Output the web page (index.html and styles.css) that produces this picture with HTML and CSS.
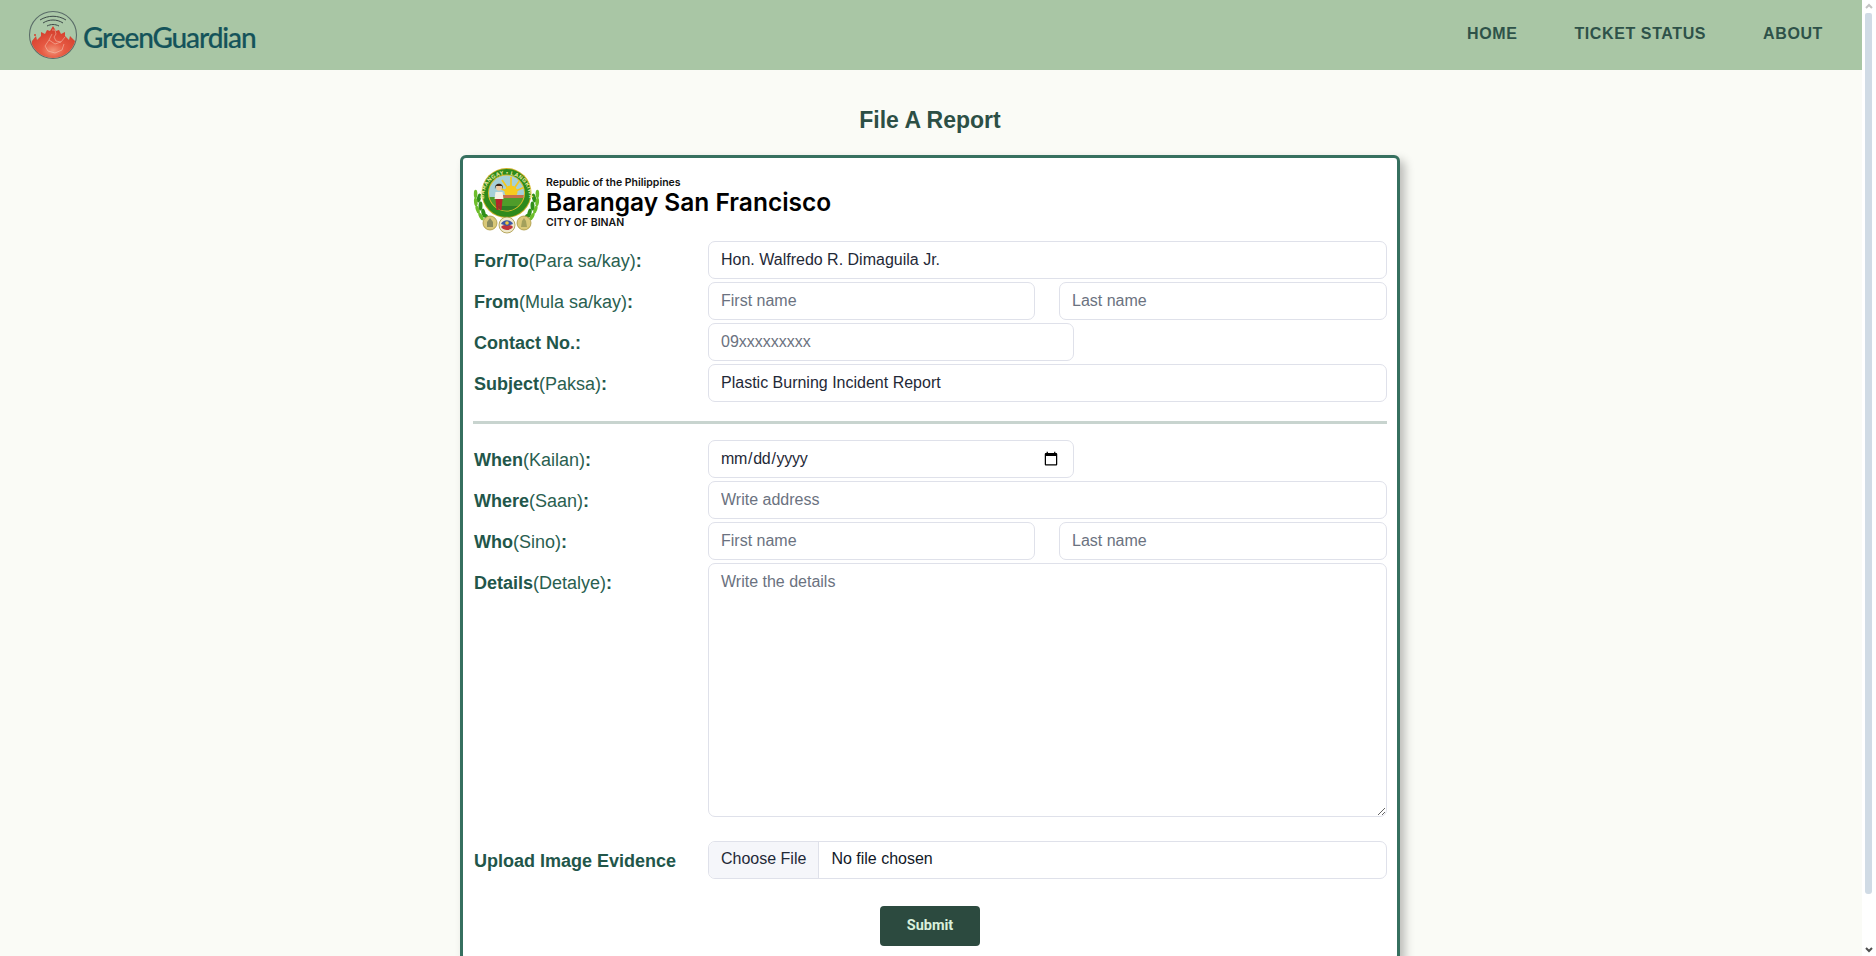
FILE: index.html
```html
<!DOCTYPE html>
<html lang="en">
<head>
  <meta charset="UTF-8" />
  <meta name="viewport" content="width=device-width, initial-scale=1.0"/>
  <title>GreenGuardian - File A Report</title>
  <link rel="stylesheet" href="styles.css">
</head>
<body>
  <div class="window">
    <div class="main">
      <header class="topbar">
        <a class="brand" href="#">
          <svg class="brand-icon" viewBox="0 0 50 50" width="50" height="50" aria-hidden="true">
            <defs>
              <radialGradient id="flameFill" cx="50%" cy="72%" r="58%">
                <stop offset="0%" stop-color="#f39478"/>
                <stop offset="40%" stop-color="#e75a43"/>
                <stop offset="100%" stop-color="#d5402e"/>
              </radialGradient>
              <clipPath id="ballClip"><circle cx="25" cy="25" r="23"/></clipPath>
            </defs>
            <circle cx="25" cy="25" r="23.5" fill="#abc8a8" stroke="#5b6d69" stroke-width="1.1"/>
            <g clip-path="url(#ballClip)">
              <path d="M4 31l4-5 1 4 4-4v-4l4 2 2-4 3 1 3-5 3 5 3-1 2 4 4-2v4l4 4 1-4 5 5 3 19H0z" fill="url(#flameFill)"/>
            </g>
            <circle cx="7" cy="25" r="1" fill="#d5402e"/>
            <g fill="none" stroke="#f9dfcf" stroke-width=".6" opacity=".75">
              <path d="M24 20h3l1 4-2 3 2 4 5 1 4-5"/>
              <path d="M24 24l-3 6-4 6 3 5 7 2 7-3 2-6"/>
              <path d="M21 30l6 4 6-2"/>
            </g>
            <g fill="none" stroke="#3d4a48" stroke-width="1">
              <path d="M12 10c8-5 18-5 26 0"/>
              <path d="M15 13c6-4 14-4 20 0"/>
              <path d="M19 16c4-2 8-2 12 0"/>
            </g>
          </svg>
          <span class="brand-name">GreenGuardian</span>
        </a>
        <nav class="nav">
          <a href="#">HOME</a>
          <a href="#">TICKET STATUS</a>
          <a href="#">ABOUT</a>
        </nav>
      </header>

      <main class="content">
        <h1 class="page-title">File A Report</h1>
        <form class="card">
          <div class="letterhead">
            <svg class="seal" viewBox="0 0 68 66" width="68" height="66" aria-hidden="true">
              <defs>
                <path id="ringArc" d="M11 29a22.5 22.5 0 1 1 45 0"/>
                <clipPath id="sealClip"><circle cx="33.5" cy="25" r="17.5"/></clipPath>
                <g id="laurel">
                  <g fill="#2f8f1a">
                    <ellipse cx="6" cy="30" rx="2" ry="4.5" transform="rotate(14 6 30)"/>
                    <ellipse cx="7.5" cy="38" rx="2" ry="4.5" transform="rotate(2 7.5 38)"/>
                    <ellipse cx="10.5" cy="45" rx="2" ry="4.5" transform="rotate(-14 10.5 45)"/>
                    <ellipse cx="14" cy="50" rx="2" ry="4.5" transform="rotate(-28 14 50)"/>
                  </g>
                  <g fill="#6dbd2b">
                    <ellipse cx="2.6" cy="26" rx="1.8" ry="4.2"/>
                    <ellipse cx="2.8" cy="34" rx="1.8" ry="4.2" transform="rotate(-6 2.8 34)"/>
                    <ellipse cx="4.6" cy="41.5" rx="1.8" ry="4.2" transform="rotate(-18 4.6 41.5)"/>
                    <ellipse cx="8" cy="48.5" rx="1.8" ry="4.2" transform="rotate(-30 8 48.5)"/>
                  </g>
                </g>
              </defs>
              <use href="#laurel"/>
              <use href="#laurel" transform="translate(67 0) scale(-1 1)"/>
              <circle cx="33.5" cy="25" r="25" fill="#cdb02a"/>
              <circle cx="33.5" cy="25" r="24" fill="#2e8a1c"/>
              <circle cx="33.5" cy="25" r="18.5" fill="#dcbb2e"/>
              <g clip-path="url(#sealClip)">
                <rect x="14" y="6" width="40" height="24" fill="#a6d0d8"/>
                <g stroke="#f5c81e" stroke-width="1.7">
                  <path d="M38 25V9M38 25l9-13M38 25l-9-13M38 25l14-6M38 25l-14-6"/>
                </g>
                <circle cx="38" cy="24" r="6.5" fill="#f7cb1f"/>
                <rect x="14" y="29" width="40" height="16" fill="#4f9c2a"/>
                <rect x="30" y="27" width="21" height="3" fill="#c9714a"/>
                <rect x="14" y="38" width="40" height="6" fill="#2e7f24"/>
              </g>
              <circle cx="26" cy="20" r="2.8" fill="#f0c9a0"/>
              <path d="M22 21c-1-7 9-7 8 0l-1-3h-6z" fill="#3d2416"/>
              <path d="M22.5 24h7l1 7h-9z" fill="#f6f1e4"/>
              <path d="M22.5 31h7l-1 11h-2l-.5-7-.5 7h-2z" fill="#b8242a"/>
              <text class="seal-ring" fill="#f5eda2"><textPath href="#ringArc" startOffset="50%" text-anchor="middle">BARANGAY • LANGKIWA</textPath></text>
              <circle cx="17" cy="55" r="7" fill="#d9c878" stroke="#a8963f" stroke-width=".8"/>
              <path d="M14 59v-5l3-4 3 4v5z" fill="#8a8c5e"/>
              <circle cx="34" cy="57" r="8" fill="#efe9cc" stroke="#a8963f" stroke-width=".8"/>
              <path d="M28 59c2-3 10-3 12 0-3 4-9 4-12 0z" fill="#c0343a"/>
              <path d="M28 56c2-5 10-5 12 0l-6 2z" fill="#3c58a6"/>
              <circle cx="34" cy="55" r="1.8" fill="#f2c63c"/>
              <circle cx="51" cy="55" r="7" fill="#d9c878" stroke="#a8963f" stroke-width=".8"/>
              <path d="M48 59l1-6 2-3 2 3 1 6z" fill="#a3a05c"/>
            </svg>
            <div class="letterhead-text">
              <div class="lh-small">Republic of the Philippines</div>
              <div class="lh-big">Barangay San Francisco</div>
              <div class="lh-small">CITY OF BINAN</div>
            </div>
          </div>

          <div class="rows">
            <div class="row">
              <label class="lbl"><b>For/To</b>(Para sa/kay)<b>:</b></label>
              <input class="field" type="text" value="Hon. Walfredo R. Dimaguila Jr.">
            </div>
            <div class="row">
              <label class="lbl"><b>From</b>(Mula sa/kay)<b>:</b></label>
              <div class="pair">
                <input class="field" type="text" placeholder="First name">
                <input class="field" type="text" placeholder="Last name">
              </div>
            </div>
            <div class="row">
              <label class="lbl"><b>Contact No.:</b></label>
              <input class="field narrow" type="text" placeholder="09xxxxxxxxx">
            </div>
            <div class="row">
              <label class="lbl"><b>Subject</b>(Paksa)<b>:</b></label>
              <input class="field" type="text" value="Plastic Burning Incident Report">
            </div>
          </div>

          <hr class="divider">

          <div class="rows">
            <div class="row">
              <label class="lbl"><b>When</b>(Kailan)<b>:</b></label>
              <input class="field narrow date" type="date">
            </div>
            <div class="row">
              <label class="lbl"><b>Where</b>(Saan)<b>:</b></label>
              <input class="field" type="text" placeholder="Write address">
            </div>
            <div class="row">
              <label class="lbl"><b>Who</b>(Sino)<b>:</b></label>
              <div class="pair">
                <input class="field" type="text" placeholder="First name">
                <input class="field" type="text" placeholder="Last name">
              </div>
            </div>
            <div class="row row-top">
              <label class="lbl"><b>Details</b>(Detalye)<b>:</b></label>
              <textarea class="field details" placeholder="Write the details"></textarea>
            </div>
            <div class="row row-upload">
              <label class="lbl"><b>Upload Image Evidence</b></label>
              <input class="field file" type="file">
            </div>
          </div>

          <div class="actions">
            <button class="submit" type="button">Submit</button>
          </div>
        </form>
      </main>
    </div>

    <div class="scrollbar">
      <svg class="arrow" viewBox="0 0 8 6" width="8" height="6" aria-hidden="true"><path d="M1 5l3-3 3 3" fill="none" stroke="#c4c4c4" stroke-width="2"/></svg>
      <div class="thumb"></div>
      <svg class="arrow" viewBox="0 0 8 6" width="8" height="6" aria-hidden="true"><path d="M1 1l3 3 3-3" fill="none" stroke="#505050" stroke-width="2"/></svg>
    </div>
  </div>
</body>
</html>
```

FILE: styles.css
```css
* {
  box-sizing: border-box;
}
html, body {
  margin: 0;
  height: 100%;
  overflow: hidden;
}
body {
  font-family: "Liberation Sans", Arial, sans-serif;
  background: #fafbf6;
  color: #2c4f45;
}
.window {
  display: flex;
  height: 100vh;
}
.main {
  flex: 1;
  min-width: 0;
  overflow: hidden;
}
.topbar {
  height: 70px;
  background: #a9c6a5;
  display: flex;
  align-items: center;
  justify-content: space-between;
  padding: 0 39px 0 28px;
}
.brand {
  display: flex;
  align-items: center;
  gap: 5px;
  text-decoration: none;
}
.brand-icon {
  display: block;
}
.brand-name {
  font-family: Lato, sans-serif;
  font-size: 28px;
  font-weight: 500;
  color: #14535a;
  letter-spacing: -1.1px;
  -webkit-text-stroke: 0.2px #14535a;
  padding-top: 4px;
}
.nav {
  display: flex;
  gap: 57px;
  padding-bottom: 2px;
}
.nav a {
  font-size: 16px;
  font-weight: bold;
  letter-spacing: 0.6px;
  color: #2e5249;
  text-decoration: none;
}
.content {
  padding: 36px 2px 0 0;
}
.page-title {
  margin: 0 0 21px;
  font-size: 23px;
  line-height: 28px;
  text-align: center;
  color: #2c4f45;
}
.card {
  width: 940px;
  margin: 0 auto;
  padding: 10px 10px 12px;
  background: #fff;
  border: 3px solid #36705f;
  border-radius: 6px;
  box-shadow: 5px 5px 10px rgba(0,0,0,0.25);
}
.letterhead {
  display: flex;
  gap: 5px;
  margin-bottom: 7px;
}
.seal {
  display: block;
  flex: none;
}
.seal-ring {
  font-family: "Liberation Sans", sans-serif;
  font-size: 5.5px;
  font-weight: bold;
  letter-spacing: 0.4px;
}
.letterhead-text {
  color: #111;
  font-family: Inter, sans-serif;
  padding-top: 9px;
}
.lh-small {
  font-size: 10.5px;
  font-weight: 600;
  line-height: 12px;
}
.lh-big {
  margin-bottom: 2px;
  font-size: 24.5px;
  font-weight: 600;
  line-height: 26px;
  color: #000;
}
.rows {
  display: flex;
  flex-direction: column;
  gap: 3px;
}
.row {
  display: flex;
  align-items: center;
}
.row-top {
  align-items: flex-start;
}
.row-top .lbl {
  padding-top: 10px;
}
.row-upload {
  margin-top: 21px;
}
.lbl {
  flex: none;
  width: 235px;
  padding: 2px 0 0 1px;
  font-size: 18px;
  color: #2a6050;
}
.lbl b {
  color: #22564a;
}
.field {
  display: block;
  flex: 1;
  min-width: 0;
  width: 100%;
  height: 38px;
  padding: 0 12px;
  border: 1px solid #dfe1ea;
  border-radius: 7px;
  background: #fff;
  font-family: "Liberation Sans", Arial, sans-serif;
  font-size: 16px;
  color: #1f2937;
  outline: none;
}
.field::placeholder {
  color: #6b7280;
  opacity: 1;
}
.narrow {
  flex: none;
  width: 366px;
}
.date {
  padding-left: 11px;
  letter-spacing: -0.3px;
}
.pair {
  flex: 1;
  display: grid;
  grid-template-columns: 327px 1fr;
  gap: 24px;
}
.details {
  height: 254px;
  padding-top: 9px;
  padding-bottom: 8px;
  resize: vertical;
}
.file {
  padding: 0;
  line-height: 34px;
  color: #111827;
}
.file::file-selector-button {
  height: 36px;
  padding: 0 12px 2px;
  margin-right: 12px;
  border: 0;
  border-right: 1px solid #dfe1ea;
  background: #f5f6fa;
  color: #1f2937;
  font-family: inherit;
  font-size: 16px;
}
.divider {
  height: 3px;
  margin: 19px 0 16px;
  border: 0;
  background: #c8d4cf;
}
.actions {
  display: flex;
  justify-content: center;
  margin-top: 27px;
}
.submit {
  width: 100px;
  height: 40px;
  padding: 0 0 2px;
  border: 0;
  border-radius: 4px;
  background: #2c4a3f;
  color: #d9f0dc;
  font-family: Roboto, sans-serif;
  font-size: 14.5px;
  font-weight: bold;
}
.scrollbar {
  flex: none;
  width: 14px;
  display: flex;
  flex-direction: column;
  align-items: center;
  gap: 4px;
  padding: 3px 1px 3px 0;
  background: #fff;
}
.thumb {
  flex: none;
  width: 7px;
  height: 881px;
  background: #d0dbe5;
  border-radius: 2px 2px 3px 3px;
}
.arrow {
  display: block;
}
.thumb + .arrow {
  margin-top: auto;
}
```
